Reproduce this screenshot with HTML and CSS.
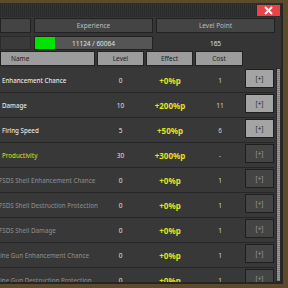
FILE: index.html
```html
<!DOCTYPE html>
<html lang="en">
<head>
  <meta charset="UTF-8">
  <title>Upgrades</title>
  <link rel="stylesheet" href="styles.css">
</head>
<body>
  <div class="window">
    <div class="titlebar">
      <div class="close">
        <svg width="9" height="9" viewBox="0 0 9 9"><path d="M1 1L8 8M8 1L1 8" stroke="#fff" stroke-width="2"/></svg>
      </div>
    </div>

    <div class="stats">
      <div class="box"></div>
      <div class="box">Experience</div>
      <div class="box">Level Point</div>
      <div class="blank"></div>
      <div class="exp">
        <div class="fill"></div>
        <span>11124 / 60064</span>
      </div>
      <div class="points">165</div>
    </div>

    <div class="head">
      <div class="hcell name">Name</div>
      <div class="hcell">Level</div>
      <div class="hcell">Effect</div>
      <div class="hcell">Cost</div>
    </div>

    <div class="list">
      <div class="rows">
        <div class="row on">
          <div class="name">Enhancement Chance</div>
          <div class="lv">0</div>
          <div class="fx">+0%p</div>
          <div class="cost">1</div>
          <div class="btn">[+]</div>
        </div>
        <div class="row on">
          <div class="name">Damage</div>
          <div class="lv">10</div>
          <div class="fx">+200%p</div>
          <div class="cost">11</div>
          <div class="btn">[+]</div>
        </div>
        <div class="row on">
          <div class="name">Firing Speed</div>
          <div class="lv">5</div>
          <div class="fx">+50%p</div>
          <div class="cost">6</div>
          <div class="btn">[+]</div>
        </div>
        <div class="row max">
          <div class="name">Productivity</div>
          <div class="lv">30</div>
          <div class="fx">+300%p</div>
          <div class="cost">-</div>
          <div class="btn">[+]</div>
        </div>
        <div class="row off">
          <div class="name"><span class="fsds">FSDS Shell Enhancement Chance</span></div>
          <div class="lv">0</div>
          <div class="fx">+0%p</div>
          <div class="cost">1</div>
          <div class="btn">[+]</div>
        </div>
        <div class="row off">
          <div class="name"><span class="fsds">FSDS Shell Destruction Protection</span></div>
          <div class="lv">0</div>
          <div class="fx">+0%p</div>
          <div class="cost">1</div>
          <div class="btn">[+]</div>
        </div>
        <div class="row off">
          <div class="name"><span class="fsds">FSDS Shell Damage</span></div>
          <div class="lv">0</div>
          <div class="fx">+0%p</div>
          <div class="cost">1</div>
          <div class="btn">[+]</div>
        </div>
        <div class="row off">
          <div class="name"><span class="mg">Machine Gun Enhancement Chance</span></div>
          <div class="lv">0</div>
          <div class="fx">+0%p</div>
          <div class="cost">1</div>
          <div class="btn">[+]</div>
        </div>
        <div class="row off">
          <div class="name"><span class="mg">Machine Gun Destruction Protection</span></div>
          <div class="lv">0</div>
          <div class="fx">+0%p</div>
          <div class="cost">1</div>
          <div class="btn">[+]</div>
        </div>
      </div>
      <div class="scroll"><div class="thumb"></div></div>
    </div>
  </div>
</body>
</html>
```

FILE: styles.css
```css
body {
  margin: 0;
  background-color: #5c4a2c;
  font-family: "Noto Sans", "Open Sans", sans-serif;
  color: #d8d8d8;
  overflow: hidden;
}
.window {
  margin-top: 3px;
  width: 283px;
  height: 281px;
  background-color: #353535;
  border-right: 2px solid #262626;
  border-bottom: 2px solid #262626;
  box-sizing: border-box;
  overflow: hidden;
}
.titlebar {
  height: 14px;
  display: flex;
  justify-content: flex-end;
  align-items: flex-start;
  padding: 2px 1px 0 0;
  box-sizing: border-box;
  background-color: #2e2e2e;
  background-image: repeating-linear-gradient(90deg, #2a2a2a 0, #2a2a2a 1px, #333 1px, #333 2px);
}
.close {
  width: 23px;
  height: 11px;
  background-color: #e8424a;
  display: flex;
  align-items: center;
  justify-content: center;
}
.stats {
  display: grid;
  grid-template-columns: 31px 119px 119px;
  grid-template-rows: 15px 14px;
  column-gap: 3px;
  row-gap: 3px;
  padding-top: 1px;
  font-size: 6.5px;
}
.box {
  background-color: #444;
  border: 1px solid #222;
  color: #bdbdbd;
  display: flex;
  align-items: center;
  justify-content: center;
}
.blank {
  background-color: #3a3a3a;
  border: 1px solid #2a2a2a;
}
.exp {
  position: relative;
  background-color: #555;
  border: 1px solid #222;
  display: flex;
  align-items: center;
  justify-content: center;
  color: #e0e0e0;
}
.exp .fill {
  position: absolute;
  left: 0;
  top: 0;
  bottom: 0;
  width: 20px;
  background-color: #00e400;
}
.exp span {
  position: relative;
}
.points {
  display: flex;
  align-items: center;
  justify-content: center;
  color: #e0e0e0;
}
.head {
  display: grid;
  grid-template-columns: 95px 47px 47px 48px;
  column-gap: 2px;
  margin-top: 1px;
  height: 15px;
}
.hcell {
  background-color: #9c9c9c;
  border: 1px solid #222;
  color: #222;
  font-size: 6.5px;
  display: flex;
  align-items: center;
  justify-content: center;
}
.hcell.name {
  justify-content: flex-start;
  padding-left: 10px;
}
.list {
  display: flex;
  margin-top: 2px;
  height: 214px;
}
.rows {
  width: 274px;
  overflow: hidden;
}
.row {
  display: grid;
  grid-template-columns: 96px 49px 50px 50px 29px;
  height: 25px;
  border-bottom: 1px solid #262626;
  box-shadow: 0 1px 0 #424242;
  box-sizing: border-box;
  align-items: center;
  background-color: #383838;
}
.row > div {
  text-align: center;
  font-size: 6.5px;
}
.row .name {
  text-align: left;
  padding-left: 2px;
  white-space: nowrap;
  font-size: 6.2px;
  font-weight: 500;
}
.fsds {
  margin-left: -3px;
}
.mg {
  margin-left: -18px;
}
.row .lv {
  color: #e0e0e0;
}
.row .fx {
  color: #e2e21e;
  font-weight: bold;
  font-size: 8px;
}
.row .cost {
  color: #cfcfcf;
}
.row .btn {
  height: 19px;
  margin-top: -3px;
  border: 1px solid #1e1e1e;
  box-sizing: border-box;
  display: flex;
  align-items: center;
  justify-content: center;
  font-size: 6.5px;
}
.on .name {
  color: #e4e4e4;
}
.on .btn {
  background-color: #a4a4a4;
  color: #2a2a2a;
}
.max .btn,
.off .btn {
  background-color: #444;
  color: #9a9a9a;
}
.max .name {
  color: #cfcf1c;
}
.off .name {
  color: #858585;
}
.scroll {
  width: 5px;
  margin-left: 2px;
  background-color: #555;
  border: 1px solid #2a2a2a;
  box-sizing: border-box;
}
.thumb {
  height: 100%;
  background-color: #8a8a8a;
  background-image: repeating-linear-gradient(180deg, #9a9a9a 0, #9a9a9a 1px, #7e7e7e 1px, #7e7e7e 2px);
}
```
